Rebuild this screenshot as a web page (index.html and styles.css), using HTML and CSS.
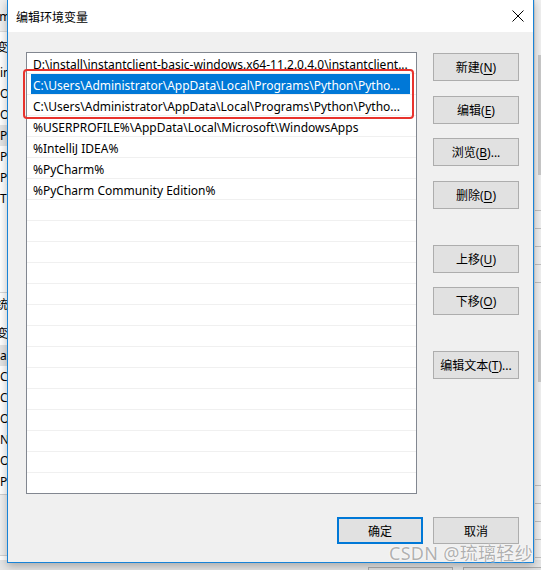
FILE: index.html
```html
<!DOCTYPE html>
<html>
<head>
<meta charset="utf-8">
<link rel="stylesheet" href="styles.css">
</head>
<body>
<div class="desktop">
  <div class="bg-left">
    <div class="bl-top"><span class="frag f-m">Sam</span></div>
    <div class="bl-row f-cjk">变</div>
    <div class="bl-row">in</div>
    <div class="bl-row">O</div>
    <div class="bl-row">O</div>
    <div class="bl-row hl">Pa</div>
    <div class="bl-row">Py</div>
    <div class="bl-row">Py</div>
    <div class="bl-row">TE</div>
    <div class="bl-gap"></div>
    <div class="bl-row f-cjk">统</div>
    <div class="bl-row2 f-cjk">变</div>
    <div class="bl-row hl">as</div>
    <div class="bl-row">C</div>
    <div class="bl-row">C</div>
    <div class="bl-row">O</div>
    <div class="bl-row">N</div>
    <div class="bl-row">O</div>
    <div class="bl-row">Pa</div>
    <div class="bl-foot"></div>
  </div>

  <div class="bg-right">
    <div class="br-thumb t1"></div>
    <div class="br-lines l1"></div>
    <div class="br-thumb t2"></div>
    <div class="br-lines l2"></div>
  </div>

  <div class="bg-bottom">
    <div class="bb-btn b1"></div>
    <div class="bb-btn b2"></div>
  </div>

  <div class="dialog">
    <div class="titlebar">
      <span class="title">编辑环境变量</span>
      <svg class="close" width="12" height="12" viewBox="0 0 12 12">
        <path d="M0.5 0.5 L11.5 11.5 M11.5 0.5 L0.5 11.5" stroke="#000" stroke-width="1" fill="none"/>
      </svg>
    </div>
    <div class="body">
      <div class="main">
        <div class="list">
          <div class="row"><span class="cell">D:\install\instantclient-basic-windows.x64-11.2.0.4.0\instantclient...</span></div>
          <div class="row sel"><span class="cell">C:\Users\Administrator\AppData\Local\Programs\Python\Pytho...</span></div>
          <div class="row"><span class="cell">C:\Users\Administrator\AppData\Local\Programs\Python\Pytho...</span></div>
          <div class="row"><span class="cell">%USERPROFILE%\AppData\Local\Microsoft\WindowsApps</span></div>
          <div class="row"><span class="cell">%IntelliJ IDEA%</span></div>
          <div class="row"><span class="cell">%PyCharm%</span></div>
          <div class="row"><span class="cell">%PyCharm Community Edition%</span></div>
          <div class="row"></div>
          <div class="row"></div>
          <div class="row"></div>
          <div class="row"></div>
          <div class="row"></div>
          <div class="row"></div>
          <div class="row"></div>
          <div class="row"></div>
          <div class="row"></div>
          <div class="row"></div>
          <div class="row"></div>
          <div class="row"></div>
          <div class="row"></div>
          <div class="row"></div>
        </div>
        <div class="side">
          <div class="btn">新建(<u>N</u>)</div>
          <div class="btn">编辑(<u>E</u>)</div>
          <div class="btn">浏览(<u>B</u>)...</div>
          <div class="btn">删除(<u>D</u>)</div>
          <div class="btn">上移(<u>U</u>)</div>
          <div class="btn">下移(<u>O</u>)</div>
          <div class="btn">编辑文本(<u>T</u>)...</div>
        </div>
      </div>
      <div class="footer">
        <div class="btn fbtn default">确定</div>
        <div class="btn fbtn">取消</div>
      </div>
    </div>
  </div>

  <div class="annot"></div>
  <div class="watermark">CSDN @琉璃轻纱</div>
</div>
</body>
</html>
```

FILE: styles.css
```css
* { box-sizing: border-box; }

body {
  margin: 0;
  font-family: "Noto Sans", "Noto Sans CJK SC", sans-serif;
}

.desktop {
  position: relative;
  width: 541px;
  height: 570px;
  overflow: hidden;
  background: #e9e9e9;
}

/* ---------- background window on the left ---------- */
.bg-left {
  position: absolute;
  left: 0;
  top: 0;
  width: 20px;
  height: 570px;
  background: #fff;
  display: flex;
  flex-direction: column;
  font-size: 12px;
  color: #000;
  overflow: hidden;
}
.bl-top {
  height: 32px;
  background: #f0f0f0;
  border-bottom: 1px solid #dcdcdc;
  line-height: 34px;
  margin-bottom: 4px;
}
.frag { display: block; margin-left: -14px; }
.bl-row, .bl-row2 {
  height: 21px;
  line-height: 21px;
  white-space: nowrap;
  margin-left: 0px;
  flex: none;
}
.f-cjk { font-family: "Noto Sans CJK SC", sans-serif; margin-left: -4px; height: 26px; line-height: 22px; }
.bl-row.hl { background: #e5e5e5; }
.bl-gap {
  height: 84px;
  flex: none;
  border-bottom: 1px solid #d9d9d9;
}
.bl-row2 { height: 26px; line-height: 28px; }
.bl-foot {
  flex: none;
  margin-top: 2px;
  height: 62px;
  border-top: 1px solid #d0d0d0;
  background: #f0f0f0;
  border-bottom: 1px solid #d4d4d4;
}

/* ---------- background window on the right ---------- */
.bg-right {
  position: absolute;
  left: 533px;
  top: 0;
  width: 8px;
  height: 570px;
  background: #f0f0f0;
  border-left: 2px solid #dadada;
}
.br-thumb {
  position: absolute;
  left: 3px;
  width: 5px;
  background: #c8c8c8;
}
.t1 { top: 55px; height: 120px; }
.t2 { top: 330px; height: 52px; }
.br-lines {
  position: absolute;
  left: 0;
  width: 8px;
  background: repeating-linear-gradient(to bottom, #c0c0c0 0, #c0c0c0 1px, transparent 1px, transparent 18px);
}
.l1 { top: 210px; height: 75px; }
.l2 { top: 485px; height: 80px; }

.bg-bottom {
  position: absolute;
  left: 0;
  top: 560px;
  width: 541px;
  height: 10px;
  background: #e6e6e6;
}
.bb-btn {
  position: absolute;
  top: 7px;
  height: 10px;
  border: 1px solid #adadad;
  background: #e1e1e1;
}
.b1 { left: 368px; width: 85px; }
.b2 { left: 463px; width: 85px; }

/* ---------- dialog ---------- */
.dialog {
  position: absolute;
  left: 7px;
  top: -1px;
  width: 527px;
  height: 564px;
  border: 1px solid #1883d7;
  background: #f0f0f0;
  box-shadow: 0 3px 9px rgba(0, 0, 0, 0.28);
  display: flex;
  flex-direction: column;
}

.titlebar {
  height: 32px;
  flex: none;
  background: #fff;
  display: flex;
  align-items: center;
  justify-content: space-between;
  padding: 0 9px 0 8px;
}
.title {
  font-family: "Noto Sans CJK SC", sans-serif;
  font-size: 12px;
  color: #000;
}
.close { display: block; margin-top: -1px; }

.body {
  flex: 1;
  display: flex;
  flex-direction: column;
  padding: 20px 14px 18px 18px;
}

.main {
  display: flex;
  gap: 16px;
}

.list {
  width: 391px;
  height: 442px;
  border: 1px solid #828790;
  background: #fff;
  overflow: hidden;
}
.row {
  height: 21px;
  border-bottom: 1px solid #f0f0f0;
  padding-left: 4px;
  font-family: "Noto Sans", sans-serif;
  font-size: 12px;
  line-height: 24px;
  color: #000;
  white-space: nowrap;
}
.cell {
  display: block;
  width: 379px;
  height: 20px;
  padding-left: 2px;
  overflow: hidden;
}
.row.sel .cell {
  background: #0078d7;
  color: #fff;
}

.side {
  display: flex;
  flex-direction: column;
  padding-top: 1px;
}
.btn {
  width: 86px;
  height: 28px;
  border: 1px solid #adadad;
  background: #e1e1e1;
  font-family: "Noto Sans", "Noto Sans CJK SC", sans-serif;
  font-size: 12px;
  color: #000;
  display: flex;
  align-items: center;
  justify-content: center;
  white-space: nowrap;
}
.btn u { text-underline-offset: 2px; }
.side .btn:nth-child(2) { margin-top: 15px; }
.side .btn:nth-child(3) { margin-top: 14px; }
.side .btn:nth-child(4) { margin-top: 15px; }
.side .btn:nth-child(5) { margin-top: 36px; }
.side .btn:nth-child(6) { margin-top: 14px; }
.side .btn:nth-child(7) { margin-top: 36px; }

.footer {
  margin-top: auto;
  display: flex;
  justify-content: flex-end;
  gap: 10px;
}
.fbtn { height: 27px; }
.fbtn.default { border: 2px solid #0078d7; }

/* ---------- annotation & watermark ---------- */
.annot {
  position: absolute;
  left: 23px;
  top: 69px;
  width: 391px;
  height: 50px;
  border: 2.5px solid #e8332d;
  border-radius: 4px;
}

.watermark {
  position: absolute;
  left: 389px;
  top: 539px;
  font-family: "Noto Sans", "Noto Sans CJK SC", sans-serif;
  font-size: 18px;
  letter-spacing: 0.3px;
  color: rgba(150, 150, 150, 0.75);
  text-shadow: 0 0 1px #fff, 0 0 2px #fff;
  white-space: nowrap;
}
```
